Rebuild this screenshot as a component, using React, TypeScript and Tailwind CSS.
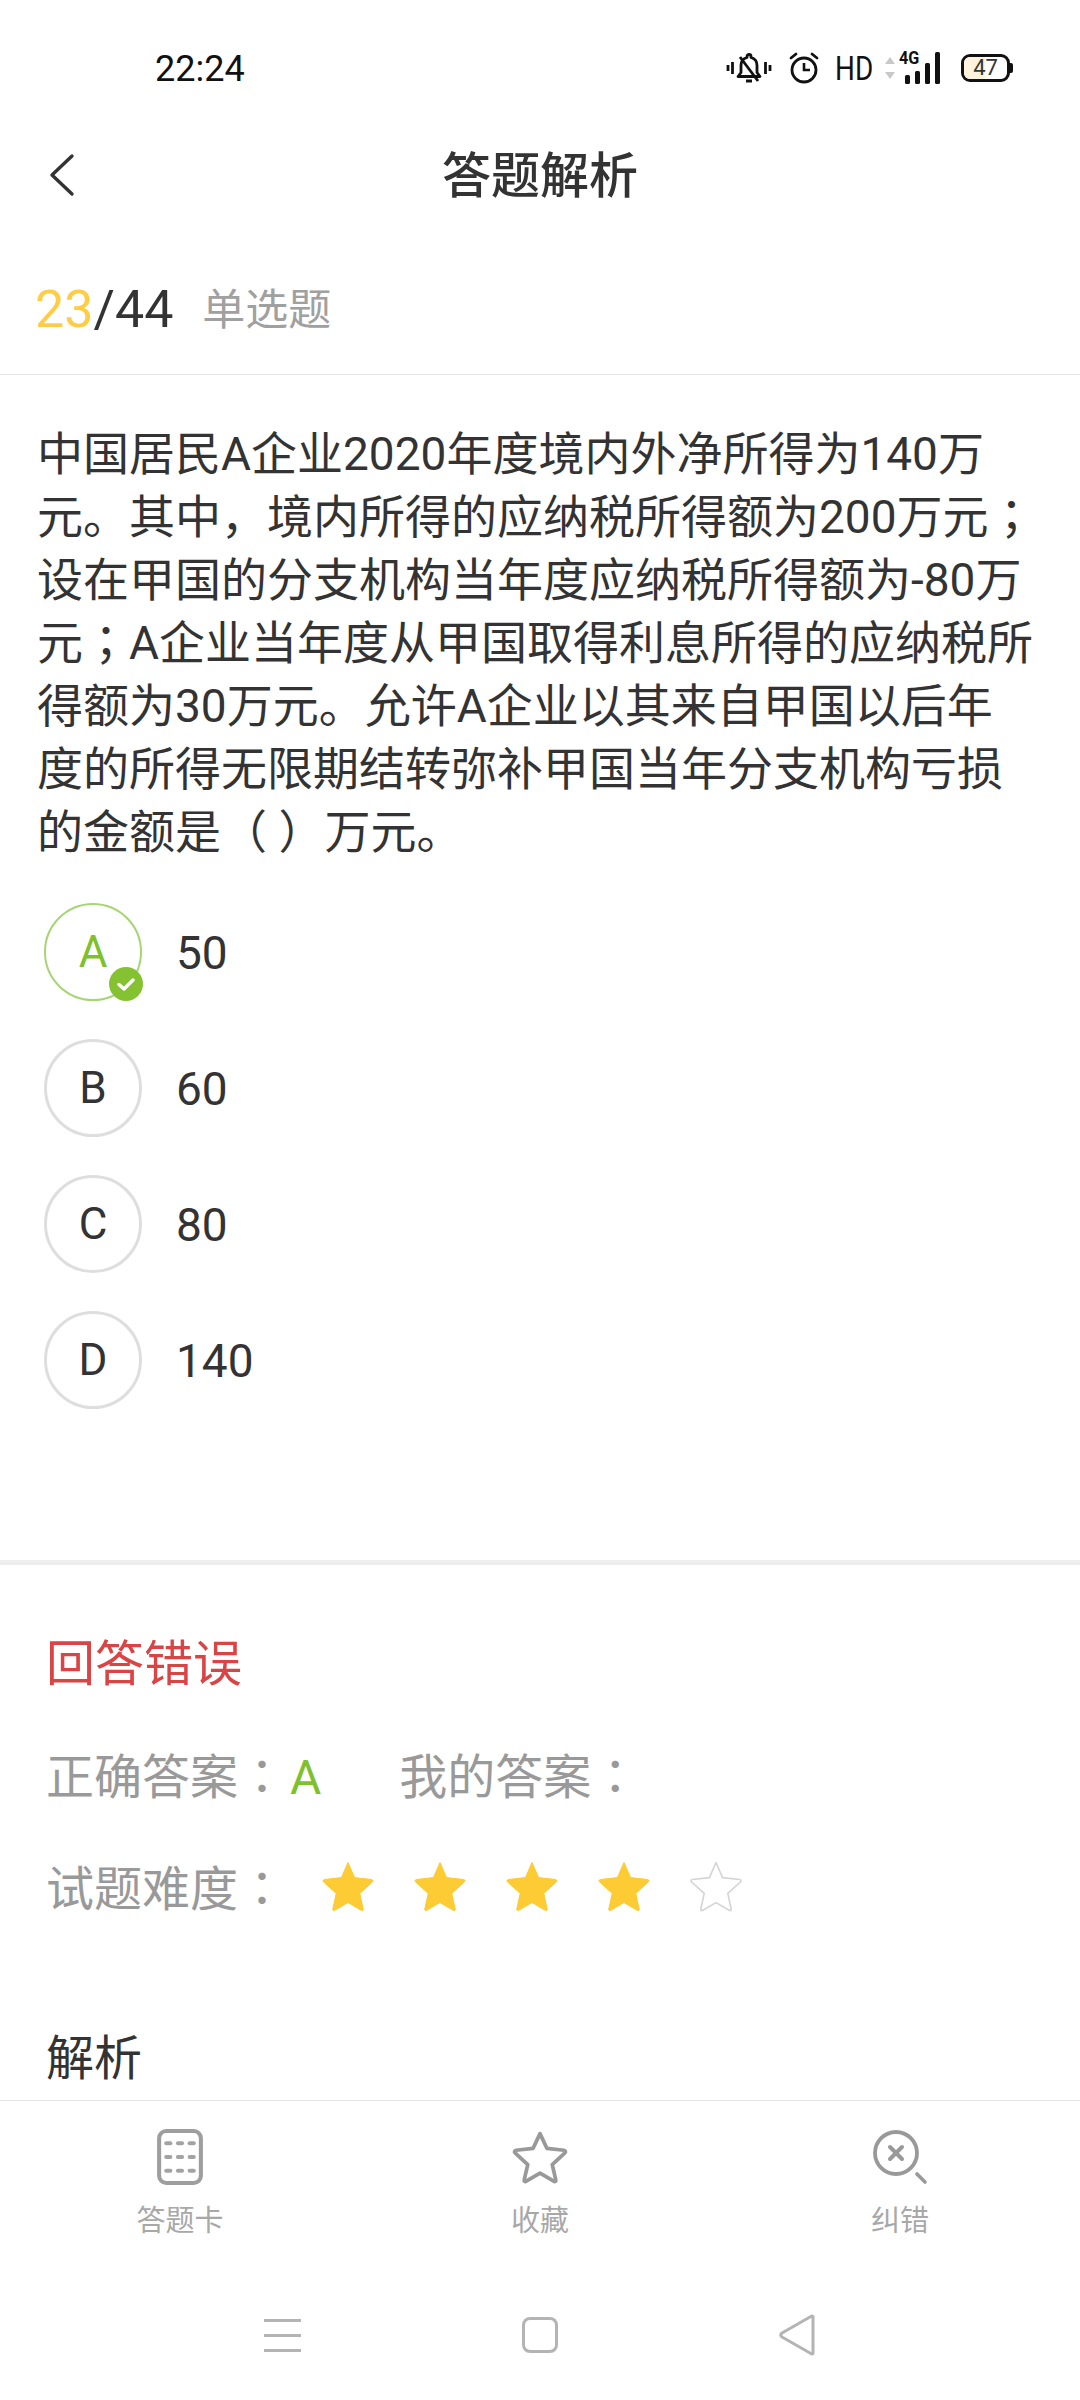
import React from "react";

const Star = ({ filled }: { filled: boolean }) => (
  <svg width="54" height="52" viewBox="0 0 54 52">
    <path
      d="M27 2.5 L33.6 17.6 L50.5 19.5 C52 19.7 52.4 21 51.4 22 L38.8 33.4 L42.2 49 C42.5 50.5 41.4 51 40.2 50.3 L27 42.6 L13.8 50.3 C12.6 51 11.5 50.5 11.8 49 L15.2 33.4 L2.6 22 C1.6 21 2 19.7 3.5 19.5 L20.4 17.6 Z"
      fill={filled ? "#fdcb33" : "#ffffff"}
      stroke={filled ? "#fdcb33" : "#d4d4d4"}
      strokeWidth={filled ? 1 : 1.6}
      strokeLinejoin="round"
    />
  </svg>
);

const Tc = ({ children }: { children: React.ReactNode }) => (
  <span className="leading-none [font-family:'Noto_Sans_CJK_TC',sans-serif]">{children}</span>
);

const Option = ({ letter, value, right }: { letter: string; value: string; right?: boolean }) => (
  <div className="flex items-center h-[98px]">
    <div
      className={
        right
          ? "relative w-[98px] h-[98px] rounded-full border-2 border-[#a6d574] flex items-center justify-center text-[#7fc02d] text-[44px]"
          : "relative w-[98px] h-[98px] rounded-full border-[3px] border-[#dedede] flex items-center justify-center text-[#333333] text-[44px]"
      }
    >
      {letter}
      {right && (
        <div className="absolute right-[-3px] bottom-[-2px] w-[34px] h-[34px] rounded-full bg-[#84c232] flex items-center justify-center">
          <svg width="18" height="14" viewBox="0 0 18 14" fill="none">
            <path d="M2 7.5 L7 12 L16 3" stroke="#ffffff" strokeWidth="3.4" strokeLinecap="round" strokeLinejoin="round" />
          </svg>
        </div>
      )}
    </div>
    <div className="ml-[34px] pt-[2px] text-[46px] text-[#333333]">{value}</div>
  </div>
);

const StatusIcons = () => (
  <div className="flex items-center">
    <svg width="46" height="32" viewBox="0 0 46 32" fill="none" stroke="#111" strokeWidth="2.8">
      <path d="M2 13v6M6.5 10v12M39.5 10v12M44 13v6" />
      <path d="M23 2.5a2 2 0 0 1 2 2v1c4 1 6 4 6 8v7l3 4H12l3-4v-7c0-4 2-7 6-8v-1a2 2 0 0 1 2-2Z" strokeLinejoin="round" />
      <path d="M14 5l18 24" />
      <path d="M20 29h6" strokeWidth="3" />
    </svg>
    <svg className="ml-[16px]" width="32" height="32" viewBox="0 0 32 32" fill="none" stroke="#111" strokeWidth="2.8">
      <circle cx="16" cy="18" r="12" />
      <path d="M16 11v7h6" strokeWidth="2.6" />
      <path d="M3 6l5-4M29 6l-5-4" strokeLinecap="round" />
    </svg>
    <div className="ml-[15px] text-[34px] leading-none text-[#111] w-[38px] [font-family:Roboto,sans-serif] scale-x-[0.82] origin-left">HD</div>
    <svg className="ml-[11px]" width="12" height="26" viewBox="0 0 12 26" fill="#c8c8c8">
      <path d="M6 2 L11 9 H1Z M6 24 L1 17 H11Z" />
    </svg>
    <div className="relative w-[44px] h-[34px] ml-[3px]">
      <div className="absolute left-0 top-[-3px] text-[19px] font-bold leading-[20px] text-[#111] scale-x-[0.85] origin-left [font-family:Roboto,sans-serif]">4G</div>
      <svg className="absolute left-0 top-0" width="44" height="34" viewBox="0 0 44 34" fill="#111">
        <rect x="6" y="24" width="5" height="9" rx="1.5" />
        <rect x="16" y="20" width="5" height="13" rx="1.5" />
        <rect x="26" y="12" width="5" height="21" rx="1.5" />
        <rect x="36" y="1" width="5" height="32" rx="1.5" />
      </svg>
    </div>
    <div className="relative ml-[18px] w-[49px] h-[28px] rounded-[9px] border-[3px] border-[#111] flex items-center justify-center overflow-hidden">
      <div className="absolute left-0 top-0 bottom-0 w-[21px] bg-[#fdf3dc]" />
      <span className="relative text-[22px] leading-none text-[#333] [font-family:Roboto,sans-serif]">47</span>
    </div>
    <div className="w-[3px] h-[10px] bg-[#111] rounded-r-[2px]" />
  </div>
);

const Tab = ({ icon, label }: { icon: React.ReactNode; label: string }) => (
  <div className="flex flex-col items-center">
    <div className="h-[60px] flex items-center justify-center">{icon}</div>
    <div className="mt-[16px] text-[29px] leading-[36px] text-[#a8a8a8]">{label}</div>
  </div>
);

const dots = [14, 27.5, 41].flatMap((y) => [11, 22.5, 34].map((x) => ({ x, y })));

export default function App() {
  return (
    <div className="w-[1080px] h-[2400px] bg-white flex flex-col overflow-hidden [font-family:Roboto,'Noto_Sans_CJK_SC',sans-serif]">
      <div className="h-[136px] shrink-0 flex items-center justify-between pl-[155px] pr-[67px]">
        <div className="text-[36px] text-[#111111] pt-[2px]">22:24</div>
        <StatusIcons />
      </div>

      <div className="relative h-[82px] shrink-0 flex items-center justify-center">
        <svg className="absolute left-[46px] top-[17px]" width="32" height="44" viewBox="0 0 32 44" fill="none">
          <path d="M26 3 L6 22 L26 41" stroke="#333333" strokeWidth="3.4" strokeLinecap="round" strokeLinejoin="round" />
        </svg>
        <div className="text-[49px] font-medium text-[#333333]">答题解析</div>
      </div>

      <div className="h-[157px] shrink-0 pt-[28px] pl-[35px] flex items-center border-b border-[#e5e5e5]">
        <div className="text-[52px] text-[#333333]">
          <span className="text-[#ffcc44]">23</span>/44
        </div>
        <div className="ml-[29px] text-[43px] text-[#a0a0a0]">单选题</div>
      </div>

      <div className="flex-1 min-h-0 overflow-hidden">
        <div className="pt-[48px] pl-[37px] pr-[38px] text-[46px] leading-[63px] text-[#333333] whitespace-nowrap">
          中国居民A企业2020年度境内外净所得为140万
          <br />
          元。其中，境内所得的应纳税所得额为200万元<Tc>；</Tc>
          <br />
          设在甲国的分支机构当年度应纳税所得额为-80万
          <br />
          元<Tc>；</Tc>A企业当年度从甲国取得利息所得的应纳税所
          <br />
          得额为30万元。允许A企业以其来自甲国以后年
          <br />
          度的所得无限期结转弥补甲国当年分支机构亏损
          <br />
          的金额是（ ）万元。
        </div>

        <div className="mt-[39px] pl-[44px] flex flex-col gap-[38px]">
          <Option letter="A" value="50" right />
          <Option letter="B" value="60" />
          <Option letter="C" value="80" />
          <Option letter="D" value="140" />
        </div>

        <div className="mt-[151px] h-[5px] bg-[#eeeeee]" />

        <div className="pl-[46px] text-[48px]">
          <div className="mt-[68px] leading-[64px] text-[#d94444] text-[49px]">回答错误</div>
          <div className="mt-[49px] leading-[64px] text-[#999999] flex items-center">
            <span>正确答案<Tc>：</Tc></span>
            <span className="ml-[4px] text-[#7fc02d]">A</span>
            <span className="ml-[78px]">我的答案<Tc>：</Tc></span>
          </div>
          <div className="mt-[48px] h-[64px] text-[#999999] flex items-center">
            <span className="leading-[64px]">试题难度<Tc>：</Tc></span>
            <div className="ml-[35px] flex gap-[38px] -mt-[8px]">
              <Star filled />
              <Star filled />
              <Star filled />
              <Star filled />
              <Star filled={false} />
            </div>
          </div>
          <div className="mt-[105px] leading-[64px] text-[#333333]">解析</div>
        </div>
      </div>

      <div className="h-[300px] shrink-0 border-t border-[#e5e5e5] bg-white flex flex-col">
        <div className="grid grid-cols-3 pt-[26px]">
          <Tab
            label="答题卡"
            icon={
              <svg width="46" height="56" viewBox="0 0 45 55" fill="none">
                <rect x="2" y="2" width="41" height="51" rx="7" stroke="#9e9e9e" strokeWidth="4" />
                {dots.map((d, i) => (
                  <rect key={i} x={d.x - 4} y={d.y - 2} width="8" height="4" rx="2" fill="#a3a3a3" />
                ))}
              </svg>
            }
          />
          <Tab
            label="收藏"
            icon={
              <svg width="58" height="54" viewBox="0 0 54 52">
                <path
                  d="M27 3.5 L33.6 17.6 L50 19.5 C51.5 19.7 52 21 51 22 L38.8 33.4 L42.2 48 C42.5 49.5 41.4 50 40.2 49.3 L27 41.6 L13.8 49.3 C12.6 50 11.5 49.5 11.8 48 L15.2 33.4 L3 22 C2 21 2.5 19.7 4 19.5 L20.4 17.6 Z"
                  fill="none"
                  stroke="#999999"
                  strokeWidth="3.6"
                  strokeLinejoin="round"
                />
              </svg>
            }
          />
          <Tab
            label="纠错"
            icon={
              <svg width="56" height="56" viewBox="0 0 56 56" fill="none" stroke="#999999">
                <circle cx="24" cy="24" r="21" strokeWidth="3.8" />
                <path d="M18 18 L30 30 M30 18 L18 30" strokeWidth="4" strokeLinecap="round" />
                <path d="M45 45 L53 53" strokeWidth="3.6" strokeLinecap="round" />
              </svg>
            }
          />
        </div>
        <div className="mt-[75px] grid grid-cols-3 px-[154px] items-center justify-items-center">
          <div className="flex flex-col gap-[12px]">
            <div className="w-[37px] h-[3px] bg-[#b4b4b4]" />
            <div className="w-[37px] h-[3px] bg-[#b4b4b4]" />
            <div className="w-[37px] h-[3px] bg-[#b4b4b4]" />
          </div>
          <div className="w-[36px] h-[36px] rounded-[8px] border-[3px] border-[#b4b4b4]" />
          <svg width="38" height="42" viewBox="0 0 38 42" fill="none">
            <path d="M35 3 L35 39 Q35 41 32 39 L4 23 Q1.5 21 4 19 L32 3 Q35 1 35 3 Z" stroke="#b4b4b4" strokeWidth="3" strokeLinejoin="round" />
          </svg>
        </div>
      </div>
    </div>
  );
}
